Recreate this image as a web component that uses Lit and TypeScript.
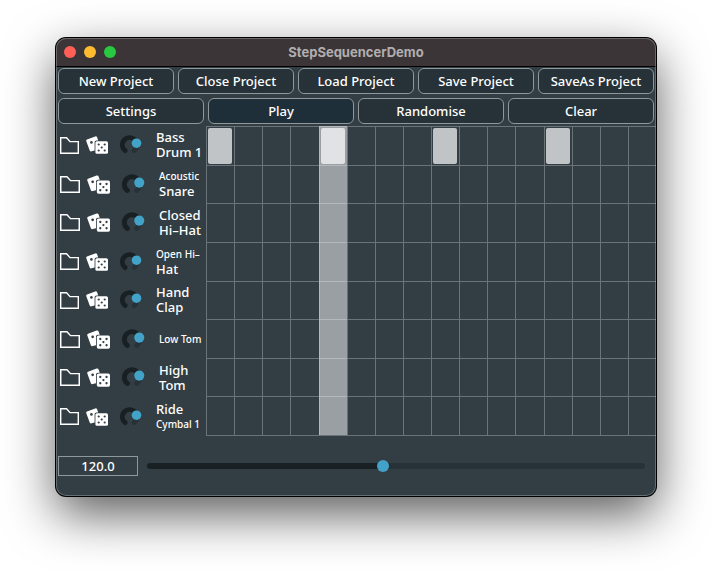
import { LitElement, html, css, svg } from "lit";
import { customElement, property, state } from "lit/decorators.js";
import { classMap } from "lit/directives/class-map.js";
import { styleMap } from "lit/directives/style-map.js";

interface LabelLine {
  text: string;
  small?: boolean;
}

interface Track {
  name: string;
  lines: LabelLine[];
  wide: boolean;
  steps: number[];
}

const STEP_COUNT = 16;

const TRACKS: Track[] = [
  { name: "Bass Drum 1", lines: [{ text: "Bass" }, { text: "Drum 1" }], wide: false, steps: [0, 4, 8, 12] },
  { name: "Acoustic Snare", lines: [{ text: "Acoustic", small: true }, { text: "Snare" }], wide: true, steps: [] },
  { name: "Closed Hi-Hat", lines: [{ text: "Closed" }, { text: "Hi–Hat" }], wide: true, steps: [] },
  { name: "Open Hi-Hat", lines: [{ text: "Open Hi–", small: true }, { text: "Hat" }], wide: false, steps: [] },
  { name: "Hand Clap", lines: [{ text: "Hand" }, { text: "Clap" }], wide: false, steps: [] },
  { name: "Low Tom", lines: [{ text: "Low Tom", small: true }], wide: true, steps: [] },
  { name: "High Tom", lines: [{ text: "High" }, { text: "Tom" }], wide: true, steps: [] },
  { name: "Ride Cymbal 1", lines: [{ text: "Ride" }, { text: "Cymbal 1", small: true }], wide: false, steps: [] },
];

@customElement("track-header")
export class TrackHeader extends LitElement {
  @property({ attribute: false }) track!: Track;

  static styles = css`
    :host {
      display: block;
      min-width: 0;
    }
    .header {
      box-sizing: border-box;
      height: 100%;
      display: grid;
      grid-template-columns: 26px 34px 36px 1fr;
      align-items: center;
      padding-left: 4px;
    }
    .header.wide {
      grid-template-columns: 27px 35px 37px 1fr;
    }
    .icon {
      display: block;
      padding: 0;
      border: 0;
      background: none;
      justify-self: start;
    }
    svg {
      display: block;
    }
    .folder svg {
      width: 19px;
      height: 17px;
    }
    .dice svg {
      width: 22px;
      height: 18px;
    }
    .knob {
      position: relative;
      justify-self: start;
    }
    .knob svg {
      width: 22px;
      height: 20px;
    }
    .wide .folder svg {
      width: 20px;
      height: 17px;
    }
    .wide .dice svg {
      width: 23px;
      height: 19px;
    }
    .wide .knob svg {
      width: 23px;
      height: 21px;
    }
    .knob input {
      position: absolute;
      inset: 0;
      width: 100%;
      height: 100%;
      margin: 0;
      opacity: 0;
    }
    .name {
      display: block;
      line-height: 15px;
      white-space: nowrap;
    }
    .line {
      display: block;
    }
    .line.small {
      font-size: 10px;
    }
  `;

  render() {
    const { name, lines, wide } = this.track;
    return html`
      <div class=${classMap({ header: true, wide })}>
        <button class="icon folder" aria-label="Load sample for ${name}">
          ${svg`<svg viewBox="0 0 19 17" preserveAspectRatio="none" aria-hidden="true">
            <path d="M0.7 0.8H6.6L10 4.6H18.3V16.2H0.7Z" fill="none" stroke="#fff" stroke-width="1.4" />
          </svg>`}
        </button>
        <button class="icon dice" aria-label="Randomise ${name}">
          ${svg`<svg viewBox="0 0 22 18" aria-hidden="true">
            <path d="M1 3.4L9.2 0.4Q10.6 0 11.1 1.3L12.2 4.4H10.4Q8.6 4.4 8.6 6.2V14.4L5.6 15.3Q4.2 15.7 3.7 14.4L0.3 5.2Q-0.1 3.9 1 3.4Z" fill="#fff" />
            <circle cx="5.4" cy="6.4" r="1.3" fill="#323e44" />
            <rect x="9.4" y="5.2" width="12.6" height="12.6" rx="1.6" fill="#fff" />
            <g fill="#323e44">
              <circle cx="12.7" cy="8.5" r="1.1" />
              <circle cx="18.7" cy="8.5" r="1.1" />
              <circle cx="15.7" cy="11.5" r="1.1" />
              <circle cx="12.7" cy="14.5" r="1.1" />
              <circle cx="18.7" cy="14.5" r="1.1" />
            </g>
          </svg>`}
        </button>
        <label class="knob">
          ${svg`<svg viewBox="0 0 22 20" aria-hidden="true">
            <g fill="none" stroke-width="4.6" stroke-linecap="round">
              <path d="M16.7 8.2A7.3 7.3 0 0 1 14 15.7" stroke="#263238" />
              <path d="M5.2 15.7A7.3 7.3 0 1 1 16.7 8.2" stroke="#182023" />
            </g>
            <circle cx="16.5" cy="8.2" r="4.8" fill="#42a2c8" />
          </svg>`}
          <input type="range" min="0" max="100" value="75" aria-label="${name} volume" />
        </label>
        <span class="name">
          ${lines.map((l) => html`<span class=${classMap({ line: true, small: !!l.small })}>${l.text}</span>`)}
        </span>
      </div>
    `;
  }
}

@customElement("app-root")
export class AppRoot extends LitElement {
  @state() private pattern: boolean[][] = TRACKS.map((t) =>
    Array.from({ length: STEP_COUNT }, (_, i) => t.steps.includes(i)),
  );
  @state() private playStep = 4;
  @state() private tempo = 120;

  private readonly minTempo = 30;
  private readonly maxTempo = 220;

  static styles = css`
    :host {
      display: flex;
      box-sizing: border-box;
      min-height: 100vh;
      padding: 38px 56px 74px;
      background: #fff;
      color: #fff;
      font: 500 13px/15px "Noto Sans", "Open Sans", sans-serif;
    }
    .window {
      position: relative;
      flex: 1;
      min-width: 0;
      display: flex;
      flex-direction: column;
      border-radius: 10px;
      background: #323e44;
      box-shadow:
        0 0 0 1px #000,
        0 18px 50px rgba(0, 0, 0, 0.65);
    }
    .window::after {
      content: "";
      position: absolute;
      inset: 0;
      border-radius: 10px;
      box-shadow: inset 0 0 0 1px rgba(255, 255, 255, 0.25);
      pointer-events: none;
    }
    .titlebar {
      display: grid;
      grid-template-columns: 1fr auto 1fr;
      align-items: center;
      height: 28px;
      padding: 0 8px;
      border-bottom: 1px solid #000;
      border-radius: 10px 10px 0 0;
      background: #3b3537;
    }
    .lights {
      display: flex;
      gap: 8px;
    }
    .light {
      width: 12px;
      height: 12px;
      padding: 0;
      border: 0;
      border-radius: 50%;
    }
    .close {
      background: #ff5f57;
    }
    .minimise {
      background: #febc2e;
    }
    .zoom {
      background: #28c840;
    }
    .title {
      margin: 0;
      font: 700 13px/16px Inter, sans-serif;
      color: #b2adae;
    }
    .toolbars {
      display: grid;
      gap: 4px;
      padding: 1px 2px 2px;
    }
    .toolbar {
      display: flex;
      gap: 4px;
    }
    .command {
      flex: 1 1 0;
      min-width: 0;
      height: 26px;
      padding: 0;
      border: 1px solid #8e989b;
      border-radius: 6px;
      background: #263238;
      color: #fff;
      font: inherit;
      white-space: nowrap;
    }
    .command.active {
      background: #1f2f39;
    }
    .sequencer {
      flex: 1;
      display: grid;
      grid-template-columns: 1fr 3fr;
    }
    .headers {
      display: grid;
      grid-template-rows: repeat(8, 1fr);
    }
    .steps {
      position: relative;
      display: grid;
      grid-template-columns: repeat(16, 1fr);
      grid-template-rows: repeat(8, 1fr);
      border-bottom: 1px solid #697378;
    }
    .step {
      display: flex;
      padding: 1px;
      border: 0 solid #697378;
      border-width: 1px 0 0 1px;
      background: none;
    }
    .pad {
      flex: 1;
      align-self: stretch;
      margin-right: 1px;
      border-radius: 2px;
    }
    .step.on .pad {
      background: #c0c4c7;
    }
    .playhead {
      position: absolute;
      top: 0;
      bottom: 0;
      width: calc(100% / 16);
      background: rgba(255, 255, 255, 0.5);
      pointer-events: none;
    }
    .transport {
      display: flex;
      align-items: center;
      gap: 9px;
      height: 60px;
      padding: 0 11px 0 2px;
    }
    .tempo {
      box-sizing: border-box;
      width: 80px;
      height: 20px;
      padding: 0;
      border: 1px solid #8e989b;
      background: none;
      color: #fff;
      font: inherit;
      text-align: center;
    }
    .slider {
      flex: 1;
      min-width: 0;
      height: 12px;
      margin: 0;
      appearance: none;
      background: none;
    }
    .slider::-webkit-slider-runnable-track {
      height: 6px;
      border-radius: 3px;
      background: linear-gradient(to right, #182023 var(--fill), #263238 var(--fill));
    }
    .slider::-webkit-slider-thumb {
      appearance: none;
      width: 12px;
      height: 12px;
      margin-top: -3px;
      border-radius: 50%;
      background: #42a2c8;
    }
  `;

  private toggle(row: number, col: number) {
    this.pattern = this.pattern.map((r, i) => (i === row ? r.map((v, j) => (j === col ? !v : v)) : r));
  }

  private clear() {
    this.pattern = this.pattern.map((r) => r.map(() => false));
  }

  private randomise() {
    this.pattern = this.pattern.map((r) => r.map(() => Math.random() < 0.3));
  }

  private setTempo(e: Event) {
    const value = Number((e.target as HTMLInputElement).value);
    if (!Number.isNaN(value)) {
      this.tempo = Math.min(this.maxTempo, Math.max(this.minTempo, value));
    }
  }

  render() {
    const fill = ((this.tempo - this.minTempo) / (this.maxTempo - this.minTempo)) * 100;
    return html`
      <main class="window">
        <header class="titlebar">
          <div class="lights">
            <button class="light close" aria-label="Close"></button>
            <button class="light minimise" aria-label="Minimise"></button>
            <button class="light zoom" aria-label="Zoom"></button>
          </div>
          <h1 class="title">StepSequencerDemo</h1>
        </header>
        <div class="toolbars">
          <div class="toolbar">
            ${["New Project", "Close Project", "Load Project", "Save Project", "SaveAs Project"].map(
              (label) => html`<button class="command">${label}</button>`,
            )}
          </div>
          <div class="toolbar">
            <button class="command">Settings</button>
            <button class="command active">Play</button>
            <button class="command" @click=${this.randomise}>Randomise</button>
            <button class="command" @click=${this.clear}>Clear</button>
          </div>
        </div>
        <section class="sequencer">
          <div class="headers">
            ${TRACKS.map((track) => html`<track-header .track=${track}></track-header>`)}
          </div>
          <div class="steps">
            ${this.pattern.map((row, r) =>
              row.map(
                (on, c) => html`<button
                  class=${classMap({ step: true, on })}
                  aria-label="${TRACKS[r].name} step ${c + 1}"
                  aria-pressed=${on ? "true" : "false"}
                  @click=${() => this.toggle(r, c)}
                ><span class="pad"></span></button>`,
              ),
            )}
            <div class="playhead" style=${styleMap({ left: `${(this.playStep / STEP_COUNT) * 100}%` })}></div>
          </div>
        </section>
        <footer class="transport">
          <input class="tempo" type="text" aria-label="Tempo" .value=${this.tempo.toFixed(1)} @change=${this.setTempo} />
          <input
            class="slider"
            type="range"
            aria-label="Tempo slider"
            min=${this.minTempo}
            max=${this.maxTempo}
            .value=${String(this.tempo)}
            style=${styleMap({ "--fill": `${fill}%` })}
            @input=${this.setTempo}
          />
        </footer>
      </main>
    `;
  }
}
